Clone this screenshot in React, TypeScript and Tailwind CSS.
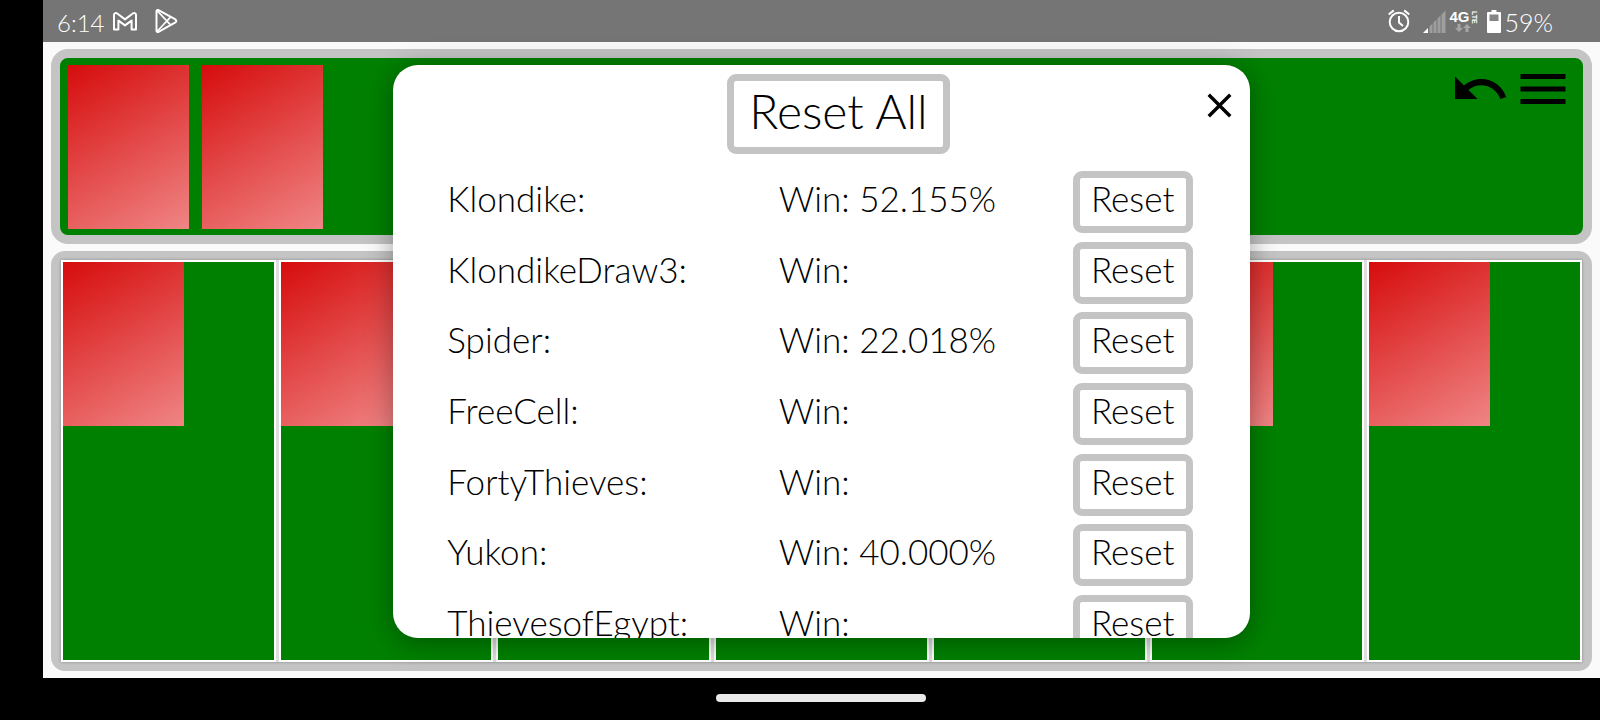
import React from "react";

type Stat = { game: string; win: string };

const stats: Stat[] = [
  { game: "Klondike", win: "52.155%" },
  { game: "KlondikeDraw3", win: "" },
  { game: "Spider", win: "22.018%" },
  { game: "FreeCell", win: "" },
  { game: "FortyThieves", win: "" },
  { game: "Yukon", win: "40.000%" },
  { game: "ThievesofEgypt", win: "" },
];

const columns = [1, 2, 3, 4, 5, 6, 7];

function Card() {
  return (
    <div className="h-[164px] w-[121px] shrink-0 bg-[linear-gradient(150deg,#d60c0c,#f08585)]" />
  );
}

function StatusBar() {
  return (
    <header className="flex h-[42px] items-center bg-[#757575] pr-[47px] pl-[14px] text-white">
      <span className="w-14 pt-[3px] text-2xl leading-[39px] font-light">6:14</span>
      <svg className="h-[19px] w-6" viewBox="0 0 24 19" fill="none" stroke="white" strokeWidth="2" strokeLinejoin="round" aria-label="Gmail">
        <path d="M1 17.600V3C1 1 3 .6 4.200 1.500L12 7.400l7.800-5.900C21 .6 23 1 23 3v14.600h-4.400V8.600L12 13.400 5.400 8.600v9z" />
      </svg>
      <svg className="ml-[18px] h-6 w-[23px]" viewBox="0 0 23 24" fill="none" stroke="white" strokeWidth="2" strokeLinejoin="round" aria-label="Play Store">
        <path d="M1.500 2.200C1.500 1 2.500.7 3.500 1.200L20 10.200c1.700 1 1.700 2.500 0 3.500L3.500 22.800c-1 .5-2 .2-2-1z" />
        <path d="M2 1.500l13.500 14.300M2 22.500L15.500 8.200" strokeWidth="1.700" />
      </svg>
      <div className="ml-auto flex items-center">
        <svg className="h-6 w-[22px]" viewBox="0 0 22 24" fill="none" stroke="white" strokeWidth="2" aria-label="Alarm">
          <circle cx="11" cy="13" r="9.300" />
          <path d="M11 7v6.500l4 3.500" />
          <path d="M.7 5.500L5.800 1.400M21.300 5.500L16.200 1.400" />
        </svg>
        <svg className="ml-[13px] h-[23px] w-[23px]" viewBox="0 0 23 23" aria-label="Signal">
          <path d="M0 23L5 18v5z" fill="white" />
          <path d="M6.500 16.500L9.500 13.500V23h-3zM10.500 12.500l3-3V23h-3zM14.500 8.500l3-3V23h-3zM18.500 4.500L22.500.5V23h-4z" fill="#9e9e9e" />
        </svg>
        <div className="ml-1 flex w-[27px] flex-col">
          <div className="flex items-center font-['Liberation_Sans',sans-serif] font-bold">
            <span className="w-[20px] text-[15px] leading-[14px]">4G</span>
            <span className="w-[7px] text-[7px] leading-[6px] [writing-mode:vertical-rl]">LTE</span>
          </div>
          <svg className="ml-[5px] h-2 w-4" viewBox="0 0 16 8" fill="#a5a5a5" aria-hidden="true">
            <path d="M2.500 0h3v4H8L4 8 0 4h2.500zM10.500 8h3V4H16L12 0 8 4h2.500z" />
          </svg>
        </div>
        <svg className="ml-[10px] h-[23px] w-[14px]" viewBox="0 0 14 23" aria-label="Battery">
          <path d="M4.500 0h5v2H13a1 1 0 0 1 1 1v19a1 1 0 0 1-1 1H1a1 1 0 0 1-1-1V3a1 1 0 0 1 1-1h3.500z" fill="white" />
          <path d="M2.500 4.500h9V11h-9z" fill="#858585" />
        </svg>
        <span className="ml-1 pt-[3px] text-[25px] leading-[39px] font-light">59%</span>
      </div>
    </header>
  );
}

function StatsDialog() {
  return (
    <div className="absolute inset-0 flex items-start justify-center pt-[23px] pb-10">
      <section
        role="dialog"
        aria-label="Statistics"
        className="relative h-full w-[55%] rounded-[25px] bg-white shadow-[0_4px_28px_rgba(0,0,0,0.35)]"
      >
        <div className="h-full overflow-y-auto rounded-[25px] pt-[9px] [scrollbar-width:none]">
          <div className="flex justify-center pl-[34px]">
            <button
              type="button"
              className="flex h-20 w-[223px] justify-center rounded-[9px] border-[7px] border-[#c4c4c4] text-5xl leading-[60px] font-light whitespace-nowrap"
            >
              Reset All
            </button>
          </div>
          <div className="pt-[13px] pr-[57px] pl-[54px]">
            <table className="h-[494px] w-full table-fixed border-collapse text-[35px] leading-[54px] font-light">
              <tbody>
                {stats.map((s) => (
                  <tr key={s.game}>
                    <th scope="row" className="p-0 pb-2 text-left font-light">
                      {s.game}:
                    </th>
                    <td className="w-[294px] p-0 pb-2">Win: {s.win}</td>
                    <td className="w-[120px] p-0">
                      <button
                        type="button"
                        aria-label={`Reset ${s.game}`}
                        className="flex h-[62px] w-full justify-center rounded-[9px] border-[7px] border-[#c4c4c4] leading-10"
                      >
                        Reset
                      </button>
                    </td>
                  </tr>
                ))}
              </tbody>
            </table>
          </div>
        </div>
        <button type="button" aria-label="Close" className="absolute top-5 right-[10px]">
          <svg className="size-[41px]" viewBox="0 0 24 24" fill="currentColor">
            <path d="M19 6.410L17.590 5 12 10.590 6.410 5 5 6.410 10.590 12 5 17.590 6.410 19 12 13.410 17.590 19 19 17.590 13.410 12z" />
          </svg>
        </button>
      </section>
    </div>
  );
}

export default function App() {
  return (
    <div className="flex h-screen flex-col bg-black pl-[43px] font-['Lato',sans-serif] text-black">
      <StatusBar />
      <main className="relative flex min-h-0 flex-1 flex-col gap-[7px] bg-[#fafafa] px-2 py-[7px]">
        <div className="flex gap-[13px] rounded-[17px] border-[9px] border-[#c4c4c4] bg-[#008000] px-2 pt-[7px] pb-[6px]">
          <Card />
          <Card />
          <nav className="ml-auto flex items-start gap-[3px] pr-[2px]">
            <button type="button" aria-label="Undo" className="-mt-[6px]">
              <svg className="size-[60px]" viewBox="0 0 24 24" fill="currentColor">
                <path d="M12.500 8c-2.650 0-5.050.99-6.900 2.600L2 7v9h9l-3.620-3.620c1.390-1.160 3.160-1.880 5.120-1.880 3.540 0 6.550 2.310 7.600 5.500l2.370-.78C21.080 11.030 17.150 8 12.500 8z" />
              </svg>
            </button>
            <button type="button" aria-label="Menu" className="-mt-[6px]">
              <svg className="size-[60px]" viewBox="0 0 24 24" fill="currentColor">
                <path d="M3 18h18v-2H3v2zm0-5h18v-2H3v2zm0-7v2h18V6H3z" />
              </svg>
            </button>
          </nav>
        </div>
        <div className="flex min-h-0 flex-1 rounded-[14px] border-[9px] border-[#c4c4c4] bg-[#c4c4c4] px-px">
          <div className="grid flex-1 grid-cols-7 gap-[3px] bg-[#dedede] shadow-[0_0_3px_rgba(0,0,0,0.3)]">
            {columns.map((c) => (
              <div key={c} className="border-2 border-white bg-[#008000]">
                <Card />
              </div>
            ))}
          </div>
        </div>
        <StatsDialog />
      </main>
      <footer className="flex h-[42px] items-center justify-center pr-[2px]">
        <div className="mt-[-2px] h-2 w-[210px] rounded-full bg-[#eaeaea]" />
      </footer>
    </div>
  );
}
